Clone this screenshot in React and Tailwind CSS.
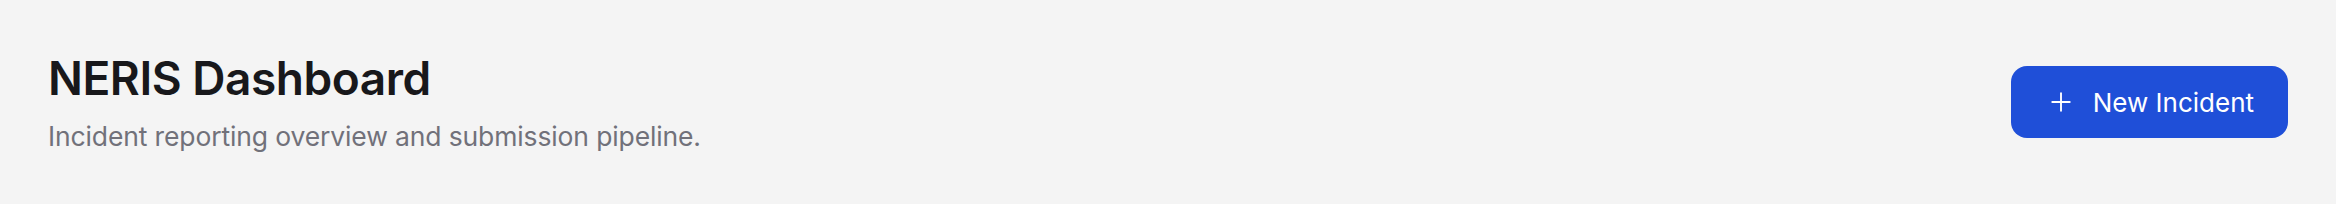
import React from 'react';
import { Plus } from 'lucide-react';

export default function App() {
  return (
    <div className="min-h-[204px] w-full bg-[#f4f4f4] font-['Inter',sans-serif]">
      {/* Page header */}
      <div className="flex h-[204px] items-center justify-between px-[48px]">
        <div className="flex flex-col gap-[11px] pt-[2px]">
          <h1 className="text-[46px] font-semibold leading-[1.2] tracking-[-0.01em] text-[#18181b]">
            NERIS Dashboard
          </h1>
          <p className="text-[26.5px] leading-[1.4] tracking-[-0.005em] text-[#71717a]">
            Incident reporting overview and submission pipeline.
          </p>
        </div>
        <button className="inline-flex h-[72px] items-center gap-[17px] rounded-[16px] bg-[#1f4fd8] pl-[35px] pr-[34px] text-[26px] font-normal text-white">
          <Plus className="h-[30px] w-[30px]" strokeWidth={1.5} />
          <span>New Incident</span>
        </button>
      </div>
    </div>
  );
}
